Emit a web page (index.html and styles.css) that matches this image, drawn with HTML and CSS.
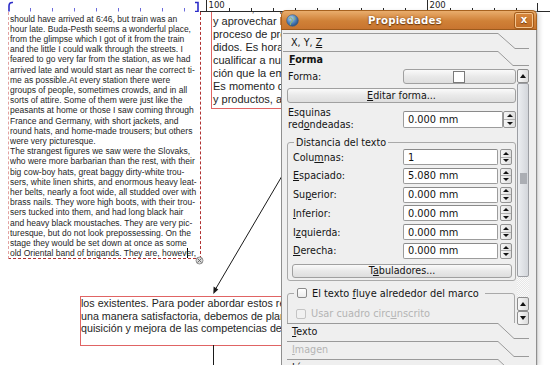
FILE: index.html
```html
<!DOCTYPE html>
<html lang="es">
<head>
<meta charset="utf-8">
<title>Propiedades</title>
<link rel="stylesheet" href="styles.css">
</head>
<body>
<div class="ruler">
  <svg class="ruler-svg" width="550" height="12" viewBox="0 0 550 12">
    <path class="r-blue-mark" d="M13 2.5 Q9 2 9 6 V11.5"/>
    <path class="r-blue-mark" d="M195 2.5 H198 V11.5 H195"/>
    <g class="r-blue">
      <line x1="30.5" y1="8" x2="30.5" y2="11.5"/>
      <line x1="52.5" y1="8" x2="52.5" y2="11.5"/>
      <line x1="74.5" y1="8" x2="74.5" y2="11.5"/>
      <line x1="96.5" y1="8" x2="96.5" y2="11.5"/>
      <line x1="118.5" y1="8" x2="118.5" y2="11.5"/>
      <line x1="140.5" y1="8" x2="140.5" y2="11.5"/>
      <line x1="162.5" y1="8" x2="162.5" y2="11.5"/>
      <line x1="184.5" y1="8" x2="184.5" y2="11.5"/>
    </g>
    <g class="r-black">
      <line x1="200" y1="11.5" x2="550" y2="11.5"/>
      <line x1="206.5" y1="0" x2="206.5" y2="11.5"/>
      <line x1="229.5" y1="8" x2="229.5" y2="11.5"/>
      <line x1="251.5" y1="8" x2="251.5" y2="11.5"/>
      <line x1="273.5" y1="8" x2="273.5" y2="11.5"/>
      <line x1="295.5" y1="8" x2="295.5" y2="11.5"/>
      <line x1="317.5" y1="8" x2="317.5" y2="11.5"/>
      <line x1="339.5" y1="8" x2="339.5" y2="11.5"/>
      <line x1="361.5" y1="8" x2="361.5" y2="11.5"/>
      <line x1="383.5" y1="8" x2="383.5" y2="11.5"/>
      <line x1="405.5" y1="8" x2="405.5" y2="11.5"/>
      <line x1="427.5" y1="0" x2="427.5" y2="11.5"/>
      <line x1="450.5" y1="8" x2="450.5" y2="11.5"/>
      <line x1="472.5" y1="8" x2="472.5" y2="11.5"/>
      <line x1="494.5" y1="8" x2="494.5" y2="11.5"/>
      <line x1="516.5" y1="8" x2="516.5" y2="11.5"/>
      <line x1="537.5" y1="3" x2="537.5" y2="11.5"/>
    </g>
    <text class="r-label" x="208.5" y="8">100</text>
    <text class="r-label" x="429.5" y="8">200</text>
  </svg>
</div>

<div class="canvas">
  <div class="frame frame-left">
    <p class="txt txt-left">should have arrived at 6:46, but train was an<br>hour late. Buda-Pesth seems a wonderful place,<br>from the glimpse which I got of it from the train<br>and the little I could walk through the streets. I<br>feared to go very far from the station, as we had<br>arrived late and would start as near the correct ti-<br>me as possible.At every station there were<br>groups of people, sometimes crowds, and in all<br>sorts of attire. Some of them were just like the<br>peasants at home or those I saw coming through<br>France and Germany, with short jackets, and<br>round hats, and home-made trousers; but others<br>were very picturesque.<br>The strangest figures we saw were the Slovaks,<br>who were more barbarian than the rest, with their<br>big cow-boy hats, great baggy dirty-white trou-<br>sers, white linen shirts, and enormous heavy leat-<br>her belts, nearly a foot wide, all studded over with<br>brass nails. They wore high boots, with their trou-<br>sers tucked into them, and had long black hair<br>and heavy black moustaches. They are very pic-<br>turesque, but do not look prepossessing. On the<br>stage they would be set down at once as some<br>old Oriental band of brigands. They are, howev<span class="caret"></span>er,</p>
  </div>

  <div class="frame frame-top">
    <p class="txt txt-top">mientos, aunque nuevos, los<br>y aprovechar las oportunidades del<br>proceso de producción y de los pe-<br>didos. Es hora de formar y<br>cualificar a nuestros empleados en<br>ción que la empresa necesita.<br>Es momento de renovar procesos<br>y productos, adaptándolos a</p>
  </div>

  <div class="frame frame-bottom">
    <p class="txt txt-bottom">los existentes. Para poder abordar estos retos de<br>una manera satisfactoria, debemos de plantear la ad-<br>quisición y mejora de las competencias de</p>
  </div>

  <svg class="links" width="550" height="353" viewBox="0 0 550 353">
    <line x1="282" y1="164" x2="215" y2="278" class="link-line"/>
    <path d="M213.3 282 L213.6 274.6 L218.3 277.4 Z" class="link-head"/>
    <line x1="213.5" y1="333" x2="213.5" y2="353" class="link-line"/>
    <g class="handle">
      <circle cx="199.5" cy="248.5" r="3.5"/>
      <path d="M197.5 246.5 L201.5 250.5 M201.5 246.5 L197.5 250.5"/>
    </g>
  </svg>
</div>

<div class="dialog">
  <div class="titlebar">
    <svg class="tb-icon" width="13" height="13" viewBox="0 0 13 13">
      <defs>
        <radialGradient id="gl" cx="0.38" cy="0.32" r="0.75">
          <stop offset="0" stop-color="#b9d6f2"/>
          <stop offset="0.55" stop-color="#4f82bd"/>
          <stop offset="1" stop-color="#23497a"/>
        </radialGradient>
      </defs>
      <circle cx="6.5" cy="6.5" r="5.8" fill="url(#gl)" stroke="#3a5a80" stroke-width="0.6"/>
      <path d="M3 4.5 Q5 3 6 5 Q7 7 5 8.5 Q4 9.5 4.5 11" fill="none" stroke="#8fb27a" stroke-width="1.2"/>
      <path d="M8 2.5 Q9.5 4 8.5 6" fill="none" stroke="#8fb27a" stroke-width="1"/>
    </svg>
    <span class="tb-title">Propiedades</span>
    <span class="tb-close">x</span>
  </div>
  <div class="dlg-body">
    <div class="tab tab-a">
      <svg class="tab-line" width="246" height="18" viewBox="0 0 246 18"><path d="M0 0.5 H215 L232 15.5 H246"/></svg>
      <span class="tab-label">X, Y, <u>Z</u></span>
    </div>
    <div class="tab tab-b">
      <svg class="tab-line" width="246" height="17" viewBox="0 0 246 17"><path d="M0 0.5 H215 L230 14.5 H246"/></svg>
      <span class="tab-label tab-bold"><u>F</u>orma</span>
    </div>

    <div class="scroll">
      <div class="scroll-content">
        <div class="row row-forma">
          <span class="lbl">Forma:</span>
          <span class="btn btn-shape"><span class="shape-box"></span></span>
        </div>
        <div class="btn btn-wide">
          <span><u>E</u>ditar forma...</span>
        </div>
        <div class="row row-corner">
          <span class="lbl lbl-two">Esquinas<br>red<u>o</u>ndeadas:</span>
          <span class="spinbox spinbox-joined">
            <span class="field">0.000 mm</span>
            <span class="spin"><span class="spin-up"></span><span class="spin-down"></span></span>
          </span>
        </div>

        <div class="group">
          <span class="group-title">Distancia del texto</span>
          <div class="grow"><span class="glbl">Colu<u>m</u>nas:</span><span class="spinbox"><span class="field">1</span><span class="spin"><span class="spin-up"></span><span class="spin-down"></span></span></span></div>
          <div class="grow"><span class="glbl"><u>E</u>spaciado:</span><span class="spinbox"><span class="field">5.080 mm</span><span class="spin"><span class="spin-up"></span><span class="spin-down"></span></span></span></div>
          <div class="grow"><span class="glbl">Su<u>p</u>erior:</span><span class="spinbox"><span class="field">0.000 mm</span><span class="spin"><span class="spin-up"></span><span class="spin-down"></span></span></span></div>
          <div class="grow"><span class="glbl"><u>I</u>nferior:</span><span class="spinbox"><span class="field">0.000 mm</span><span class="spin"><span class="spin-up"></span><span class="spin-down"></span></span></span></div>
          <div class="grow"><span class="glbl">I<u>z</u>quierda:</span><span class="spinbox"><span class="field">0.000 mm</span><span class="spin"><span class="spin-up"></span><span class="spin-down"></span></span></span></div>
          <div class="grow"><span class="glbl"><u>D</u>erecha:</span><span class="spinbox"><span class="field">0.000 mm</span><span class="spin"><span class="spin-up"></span><span class="spin-down"></span></span></span></div>
          <div class="btn btn-tabs"><span>T<u>a</u>buladores...</span></div>
        </div>

        <div class="group group-check">
          <span class="group-title check-title"><span class="checkbox"></span><span>El texto <u>f</u>luye alrededor del marco</span></span>
          <div class="check-row disabled"><span class="checkbox checkbox-off"></span><span>Usar cuadro circ<u>u</u>nscrito</span></div>
        </div>
      </div>

      <div class="scrollbar">
        <span class="sb-btn sb-top"><span class="tri-up"></span></span>
        <span class="sb-slider"><span class="grip"></span></span>
        <span class="sb-trough"></span>
        <span class="sb-btn"><span class="tri-up"></span></span>
        <span class="sb-btn"><span class="tri-down"></span></span>
      </div>
    </div>

    <div class="tab tab-c">
      <svg class="tab-line" width="246" height="18" viewBox="0 0 246 18"><path d="M4 0.5 H215 L231 15.5 H246"/></svg>
      <span class="tab-label"><u>T</u>exto</span>
    </div>
    <div class="tab tab-c disabled">
      <svg class="tab-line" width="246" height="18" viewBox="0 0 246 18"><path d="M4 0.5 H215 L231 15.5 H246"/></svg>
      <span class="tab-label"><u>I</u>magen</span>
    </div>
    <div class="tab tab-c">
      <svg class="tab-line" width="246" height="18" viewBox="0 0 246 18"><path d="M4 0.5 H215 L231 15.5 H246"/></svg>
      <span class="tab-label"><u>L</u>ínea</span>
    </div>
  </div>
</div>
</body>
</html>
```

FILE: styles.css
```css
* { box-sizing: border-box; }

html, body {
  margin: 0;
  padding: 0;
}

body {
  width: 550px;
  height: 365px;
  overflow: hidden;
  background: #ffffff;
  font-family: "Liberation Sans", Arial, sans-serif;
  display: flex;
  flex-direction: column;
  position: relative;
}

/* ---------- ruler ---------- */
.ruler {
  height: 12px;
  flex: none;
  background: #ffffff;
  position: relative;
  z-index: 2;
}
.ruler-svg { display: block; }
.r-blue line { stroke: #6b6bdc; stroke-width: 1; }
.r-blue-mark { fill: none; stroke: #2c2cc8; stroke-width: 1.6; }
.r-black line { stroke: #2a2a2a; stroke-width: 1; }
.r-label {
  font-family: "DejaVu Sans", sans-serif;
  font-size: 8.5px;
  fill: #222;
}

/* ---------- canvas ---------- */
.canvas {
  flex: 1;
  position: relative;
  overflow: hidden;
  background: #ffffff;
}

.frame {
  position: absolute;
  overflow: hidden;
}

.frame-left {
  left: 8px;
  top: 0;
  width: 193px;
  height: 247px;
  border: 1px dashed #b03030;
  border-top: none;
  border-left-color: #e2a2a2;
}

.frame-top {
  left: 211px;
  top: -11px;
  width: 150px;
  height: 108px;
  border: 1px solid #e06464;
}

.frame-bottom {
  left: 80px;
  top: 284px;
  width: 260px;
  height: 50px;
  border: 1px solid #e06464;
}

.txt {
  margin: 0;
  white-space: nowrap;
  color: #1e1e1e;
}

.txt-left {
  font-size: 8.5px;
  line-height: 10.2px;
  padding: 1.5px 0 0 1px;
}

.txt-top {
  font-size: 11px;
  line-height: 13px;
  padding: 0 0 0 1px;
}

.txt-bottom {
  font-size: 10.7px;
  line-height: 12.5px;
  padding: 0;
}

.caret {
  display: inline-block;
  width: 0;
  height: 10px;
  margin-right: -1px;
  border-left: 1px solid #000;
  vertical-align: -2px;
}

.links {
  position: absolute;
  left: 0;
  top: 0;
}
.link-line { stroke: #1a1a1a; stroke-width: 1; }
.link-head { fill: #1a1a1a; }
.handle circle { fill: #d8d8d8; stroke: #7a7a7a; stroke-width: 0.8; }
.handle path { stroke: #555; stroke-width: 0.8; }

/* ---------- dialog ---------- */
.dialog {
  position: absolute;
  left: 281px;
  top: 10px;
  width: 256px;
  font-family: "DejaVu Sans", "Noto Sans", sans-serif;
  font-size: 9.6px;
  color: #141414;
  z-index: 3;
  box-shadow: 1px 0 0 #d2d2d2, 3px 1px 4px rgba(0, 0, 0, 0.12);
  border-radius: 5px 5px 0 0;
}

.titlebar {
  height: 20px;
  border-radius: 5px 5px 0 0;
  background: linear-gradient(#e9ad6d, #d08137 55%, #c87530);
  border: 1px solid #a7621f;
  border-bottom-color: #9c5a1d;
  display: flex;
  align-items: center;
  padding: 0 3px 0 4px;
  position: relative;
}

.tb-icon { flex: none; display: block; }

.tb-title {
  flex: 1;
  text-align: center;
  color: #ffffff;
  font-weight: bold;
  font-size: 10.2px;
  letter-spacing: 0.2px;
  text-shadow: 0 1px 1px #6e3a0e, 0 0 2px #8a4a14;
  padding-right: 4px;
}

.tb-close {
  flex: none;
  width: 18px;
  height: 15px;
  border: 1px solid #f4c48e;
  border-radius: 2px;
  background: linear-gradient(#d6863c, #c26d25);
  box-shadow: 0 0 0 1px #a25c1c;
  color: #ffffff;
  font-weight: bold;
  font-size: 10px;
  line-height: 12px;
  text-align: center;
  text-shadow: 0 1px 1px #6e3a0e;
}

.dlg-body {
  background: #efefef;
  border-left: 1px solid #8f8f8f;
  border-right: 1px solid #8f8f8f;
  height: 335px;
  padding: 3px 6px 0 1px;
  display: flex;
  flex-direction: column;
  overflow: hidden;
}

/* toolbox tabs */
.tab {
  position: relative;
  flex: none;
  width: 246px;
  height: 18px;
  line-height: 18px;
  padding-left: 8px;
}
.tab-a { line-height: 19px; }
.tab-b { height: 17px; line-height: 17px; padding-left: 6px; }
.tab-line {
  position: absolute;
  left: 0;
  top: 0;
  display: block;
}
.tab-line path {
  fill: none;
  stroke: #9a9a9a;
  stroke-width: 1;
}
.tab-label { position: relative; }
.tab-bold { font-weight: bold; }
.tab-c .tab-label { padding-left: 1px; }

.disabled { color: #b4b4b4; }

u { text-decoration: underline; text-underline-offset: 1px; }

/* scroll area */
.scroll {
  flex: none;
  height: 255px;
  display: flex;
  align-items: flex-start;
}

.scroll-content {
  width: 233px;
  height: 255px;
  overflow: hidden;
  display: flex;
  flex-direction: column;
}

.row {
  display: flex;
  align-items: center;
  flex: none;
}

.lbl {
  width: 120px;
  padding-left: 5px;
  flex: none;
}

.row-forma {
  margin-top: 1px;
  height: 15px;
}

.btn {
  border: 1px solid #a0a0a0;
  border-radius: 3px;
  background: linear-gradient(#fafafa, #e9e9e9 50%, #dedede);
  display: flex;
  align-items: center;
  justify-content: center;
  flex: none;
}

.btn-shape {
  width: 113px;
  height: 15px;
}

.shape-box {
  width: 12px;
  height: 12px;
  background: #ffffff;
  border: 1px solid #7a7a7a;
  margin-right: 2px;
}

.btn-wide {
  margin: 4px 0 0 4px;
  width: 229px;
  height: 15px;
}

.row-corner {
  margin-top: 4px;
  height: 24px;
}

.lbl-two { line-height: 12px; }

.spinbox {
  display: flex;
  flex: none;
  width: 109px;
  height: 16px;
  gap: 2px;
}

.spinbox-joined {
  width: 113px;
  height: 17px;
  gap: 0;
}

.field {
  flex: 1;
  background: #ffffff;
  border: 1px solid #9c9c9c;
  border-top-color: #8a8a8a;
  border-radius: 2px;
  padding-left: 4px;
  display: flex;
  align-items: center;
  font-size: 9.8px;
  color: #111;
}

.spin {
  width: 12px;
  flex: none;
  display: flex;
  flex-direction: column;
  border: 1px solid #939393;
  border-radius: 2px;
  background: linear-gradient(90deg, #f6f6f6, #dedede);
}
.spinbox-joined .spin { width: 13px; }

.spin-up, .spin-down {
  flex: 1;
  display: flex;
  align-items: center;
  justify-content: center;
}
.spin-down { border-top: 1px solid #b0b0b0; }

.spin-up::before {
  content: "";
  border-left: 3px solid transparent;
  border-right: 3px solid transparent;
  border-bottom: 3px solid #111;
}
.spin-down::before {
  content: "";
  border-left: 3px solid transparent;
  border-right: 3px solid transparent;
  border-top: 3px solid #111;
}

/* group boxes */
.group {
  flex: none;
  margin: 11px 0 0 4px;
  width: 229px;
  border: 1px solid #a9a9a9;
  border-radius: 3px;
  padding: 0 3px 2px 5px;
  display: flex;
  flex-direction: column;
}

.group-title {
  align-self: flex-start;
  margin: -7px 0 0 1px;
  padding: 0 2px;
  background: #efefef;
  line-height: 13px;
  height: 13px;
}

.grow {
  display: flex;
  align-items: center;
  height: 16px;
  margin-bottom: 2.8px;
}
.grow:last-of-type { margin-bottom: 0; }

.glbl {
  width: 110px;
  flex: none;
}

.btn-tabs {
  margin: 2px 0 0 -1px;
  width: 220px;
  height: 14px;
  line-height: 12px;
}

.group-check {
  margin-top: 12px;
  width: 228px;
  padding-bottom: 10px;
}

.check-title {
  display: flex;
  align-items: center;
  gap: 5px;
  padding: 0 6px 0 3px;
  font-size: 9.8px;
}

.checkbox {
  width: 10px;
  height: 10px;
  flex: none;
  border: 1px solid #8a8a8a;
  border-radius: 2px;
  background: linear-gradient(#ffffff, #ececec);
}

.checkbox-off {
  border-color: #c4c4c4;
  background: #f1f1f1;
}

.check-row {
  display: flex;
  align-items: center;
  gap: 5px;
  margin-top: 8px;
  padding-left: 3px;
  height: 12px;
  font-size: 9.8px;
}

/* scrollbar */
.scrollbar {
  width: 12px;
  margin-left: 1px;
  flex: none;
  display: flex;
  flex-direction: column;
}

.sb-btn {
  height: 14px;
  flex: none;
  border: 1px solid #8d8d8d;
  border-radius: 2px;
  background: linear-gradient(90deg, #f8f8f8, #dcdcdc);
  display: flex;
  align-items: center;
  justify-content: center;
}
.sb-top { margin-top: 1px; }

.tri-up {
  border-left: 3px solid transparent;
  border-right: 3px solid transparent;
  border-bottom: 4px solid #111;
}
.tri-down {
  border-left: 3px solid transparent;
  border-right: 3px solid transparent;
  border-top: 4px solid #111;
}

.sb-slider {
  height: 194px;
  flex: none;
  border: 1px solid #9c9ea3;
  border-radius: 2px;
  background: linear-gradient(90deg, #eceef1, #d3d6db);
  display: flex;
  align-items: center;
  justify-content: center;
}

.grip {
  width: 7px;
  height: 11px;
  margin-top: -4px;
  background-image: radial-gradient(circle, #a9acb2 0.7px, transparent 0.9px);
  background-size: 2px 2px;
}

.sb-trough {
  height: 20px;
  flex: none;
  background-color: #f6f6f6;
  background-image: repeating-conic-gradient(#e6e6e6 0 25%, #fafafa 0 50%);
  background-size: 2px 2px;
}
```
